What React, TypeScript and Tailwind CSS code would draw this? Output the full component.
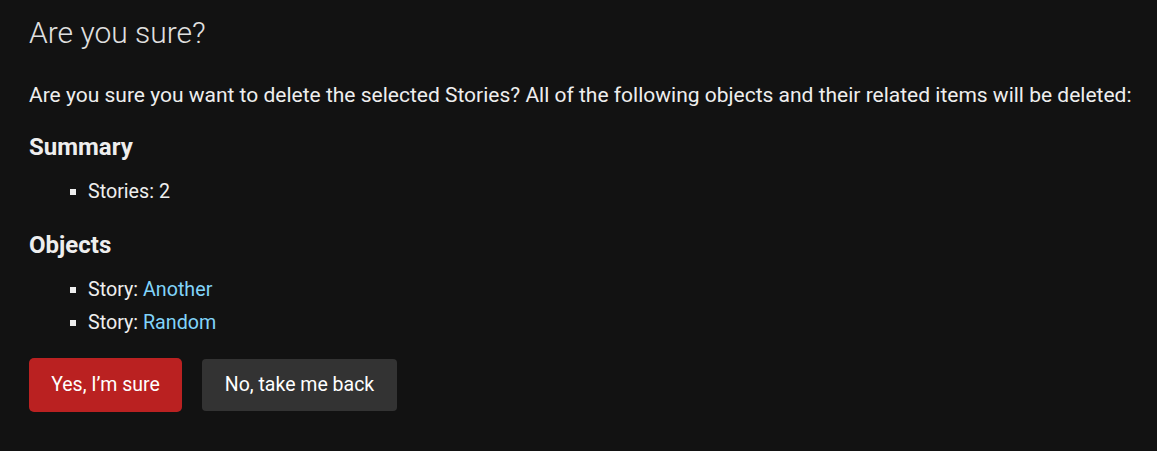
import React from "react";

function Bullet({ children }: { children: React.ReactNode }) {
  return (
    <li className="flex items-center leading-[33px] h-[33px]">
      <span className="ml-[41px] mr-[12px] w-[6px] h-[6px] bg-[#eeeeee] shrink-0" />
      <span>{children}</span>
    </li>
  );
}

export default function App() {
  return (
    <div
      className="w-[1157px] h-[451px] bg-[#121212] text-[#eeeeee] pl-[29px] pt-[15px]"
      style={{ fontFamily: "Roboto, 'Liberation Sans', sans-serif" }}
    >
      <h1 className="text-[30px] leading-[36px] font-light text-[#e0e0e0]">Are you sure?</h1>
      <p className="mt-[30px] text-[21px] leading-[28px]">
        Are you sure you want to delete the selected Stories? All of the following objects and their related items will be deleted:
      </p>
      <h2 className="mt-[23px] text-[24px] leading-[30px] font-bold">Summary</h2>
      <ul className="mt-[13px] text-[19.7px]">
        <Bullet>Stories: 2</Bullet>
      </ul>
      <h2 className="mt-[22px] text-[24px] leading-[30px] font-bold">Objects</h2>
      <ul className="mt-[13px] text-[19.7px]">
        <Bullet>
          Story: <a className="text-[#81d4fa]">Another</a>
        </Bullet>
        <Bullet>
          Story: <a className="text-[#81d4fa]">Random</a>
        </Bullet>
      </ul>
      <div className="mt-[19px] flex items-center gap-[20px]">
        <button className="h-[54px] w-[153px] rounded-[5px] bg-[#ba2121] text-white text-[19.5px]">
          Yes, I’m sure
        </button>
        <button className="h-[52px] w-[195px] rounded-[4px] bg-[#333333] text-white text-[19.5px]">
          No, take me back
        </button>
      </div>
    </div>
  );
}
